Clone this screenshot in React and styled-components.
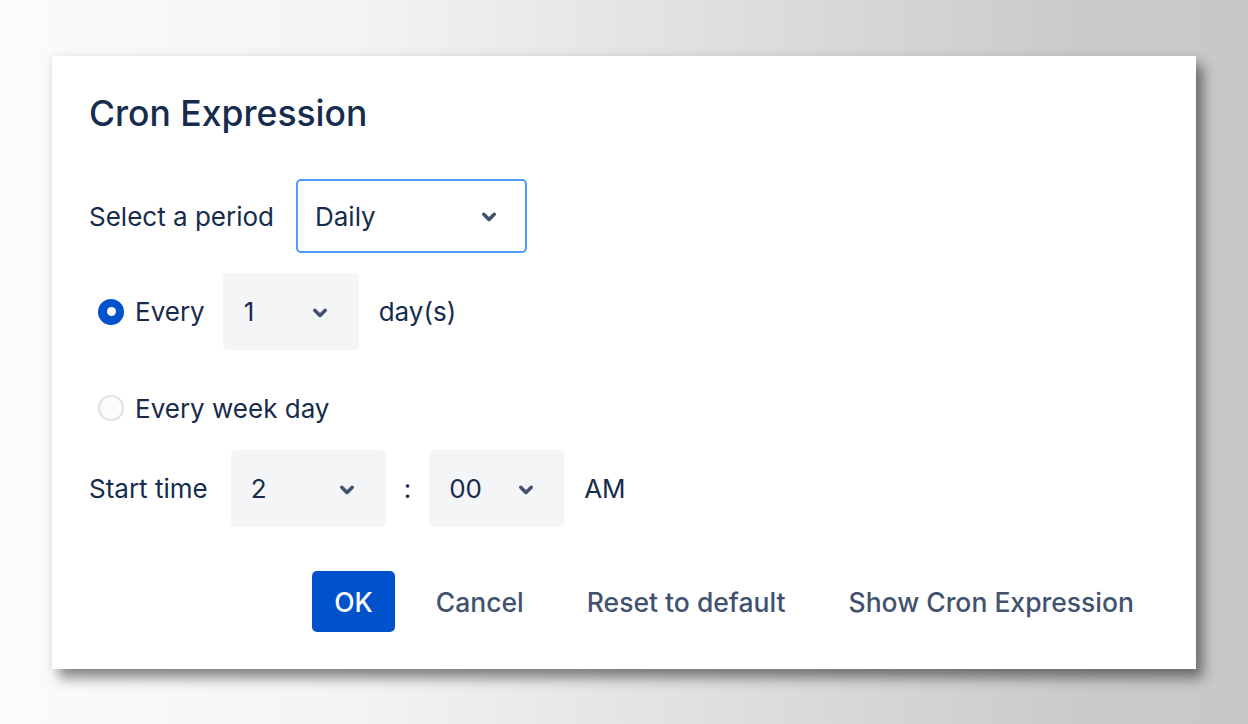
import React from 'react';
import styled, { createGlobalStyle } from 'styled-components';

const GlobalStyle = createGlobalStyle`
  html, body {
    margin: 0;
    height: 100%;
  }
  body {
    font-family: Inter, "Noto Sans", "Liberation Sans", sans-serif;
    background: linear-gradient(90deg, #fbfbfb 0%, #f4f4f4 28%, #dcdcdc 62%, #c9c9c9 88%, #c8c8c8 100%);
    color: #172b4d;
  }
`;

const Page = styled.div`
  width: 1248px;
  height: 724px;
  padding: 56px 0 0 52px;
  box-sizing: border-box;
`;

const Dialog = styled.div`
  width: 1144px;
  height: 613px;
  box-sizing: border-box;
  background: #ffffff;
  padding: 34px 40px 0 37px;
  box-shadow: 7px 9px 12px rgba(0, 0, 0, 0.45), 0 0 10px rgba(0, 0, 0, 0.06);
  display: flex;
  flex-direction: column;
`;

const Title = styled.h1`
  margin: 0;
  font-size: 35.5px;
  line-height: 48px;
  font-weight: 500;
  color: #172b4d;
`;

const Row = styled.div`
  display: flex;
  align-items: center;
  gap: ${p => p.$gap || 20}px;
  height: ${p => p.$h}px;
  margin-top: ${p => p.$mt}px;
  padding-left: ${p => p.$indent || 0}px;
`;

const Label = styled.span`
  font-size: 26px;
  color: #172b4d;
  white-space: nowrap;
  margin-right: ${p => p.$after || 0}px;
`;

const Select = styled.div`
  box-sizing: border-box;
  width: ${p => p.$w}px;
  height: ${p => p.$h}px;
  display: flex;
  align-items: center;
  justify-content: space-between;
  padding: 0 ${p => p.$pr}px 0 ${p => p.$pl}px;
  border-radius: 5px;
  background: ${p => (p.$focused ? '#ffffff' : '#f4f5f7')};
  border: ${p => (p.$focused ? '2px solid #4c9aff' : 'none')};
  font-size: 26px;
  color: #172b4d;
`;

const RadioLabel = styled.label`
  display: flex;
  align-items: center;
  gap: 11px;
  font-size: 26px;
  color: #172b4d;
  margin-right: ${p => p.$after || 0}px;
`;

const RadioDot = styled.span`
  width: 26px;
  height: 26px;
  border-radius: 50%;
  box-sizing: border-box;
  display: flex;
  align-items: center;
  justify-content: center;
  background: ${p => (p.$checked ? '#0052cc' : '#fafbfc')};
  border: ${p => (p.$checked ? 'none' : '2px solid #dfe1e6')};

  &::after {
    content: '';
    width: 9px;
    height: 9px;
    border-radius: 50%;
    background: #ffffff;
    display: ${p => (p.$checked ? 'block' : 'none')};
  }
`;

const Colon = styled.span`
  font-size: 26px;
  color: #172b4d;
  margin: 0 -2px;
`;

const Footer = styled.div`
  display: flex;
  justify-content: flex-end;
  gap: 19px;
  margin-top: 44px;
`;

const Button = styled.button`
  height: 61px;
  padding: 0 22px;
  border: none;
  border-radius: 5px;
  font-family: inherit;
  font-size: 26.5px;
  font-weight: 500;
  cursor: pointer;
  background: ${p => (p.$primary ? '#0052cc' : 'transparent')};
  color: ${p => (p.$primary ? '#ffffff' : '#42526e')};
`;

const Chevron = () => (
  <svg width="42" height="42" viewBox="0 0 24 24" aria-hidden="true">
    <path
      fill="#42526e"
      d="M8.292 10.293a1.009 1.009 0 0 0 0 1.419l2.939 2.965c.218.215.5.322.779.322s.556-.107.769-.322l2.93-2.955a1.01 1.01 0 0 0 0-1.419.987.987 0 0 0-1.406 0l-2.298 2.317-2.307-2.327a.99.99 0 0 0-1.406 0z"
    />
  </svg>
);

const Dropdown = ({ value, ...rest }) => (
  <Select {...rest}>
    <span>{value}</span>
    <Chevron />
  </Select>
);

export default function App() {
  return (
    <>
      <GlobalStyle />
      <Page>
        <Dialog>
          <Title>Cron Expression</Title>

          <Row $h={74} $mt={41} $gap={22}>
            <Label>Select a period</Label>
            <Dropdown value="Daily" $focused $w={231} $h={74} $pl={17} $pr={15} />
          </Row>

          <Row $h={77} $mt={20} $indent={9}>
            <RadioLabel $after={-2}>
              <RadioDot $checked />
              Every
            </RadioLabel>
            <Dropdown value="1" $w={136} $h={77} $pl={21} $pr={18} />
            <Label>day(s)</Label>
          </Row>

          <Row $h={40} $mt={38} $indent={9}>
            <RadioLabel>
              <RadioDot />
              Every week day
            </RadioLabel>
          </Row>

          <Row $h={77} $mt={22}>
            <Label $after={3}>Start time</Label>
            <Dropdown value="2" $w={155} $h={77} $pl={20} $pr={18} />
            <Colon>:</Colon>
            <Dropdown value="00" $w={135} $h={77} $pl={20} $pr={17} />
            <Label>AM</Label>
          </Row>

          <Footer>
            <Button $primary>OK</Button>
            <Button>Cancel</Button>
            <Button>Reset to default</Button>
            <Button>Show Cron Expression</Button>
          </Footer>
        </Dialog>
      </Page>
    </>
  );
}
